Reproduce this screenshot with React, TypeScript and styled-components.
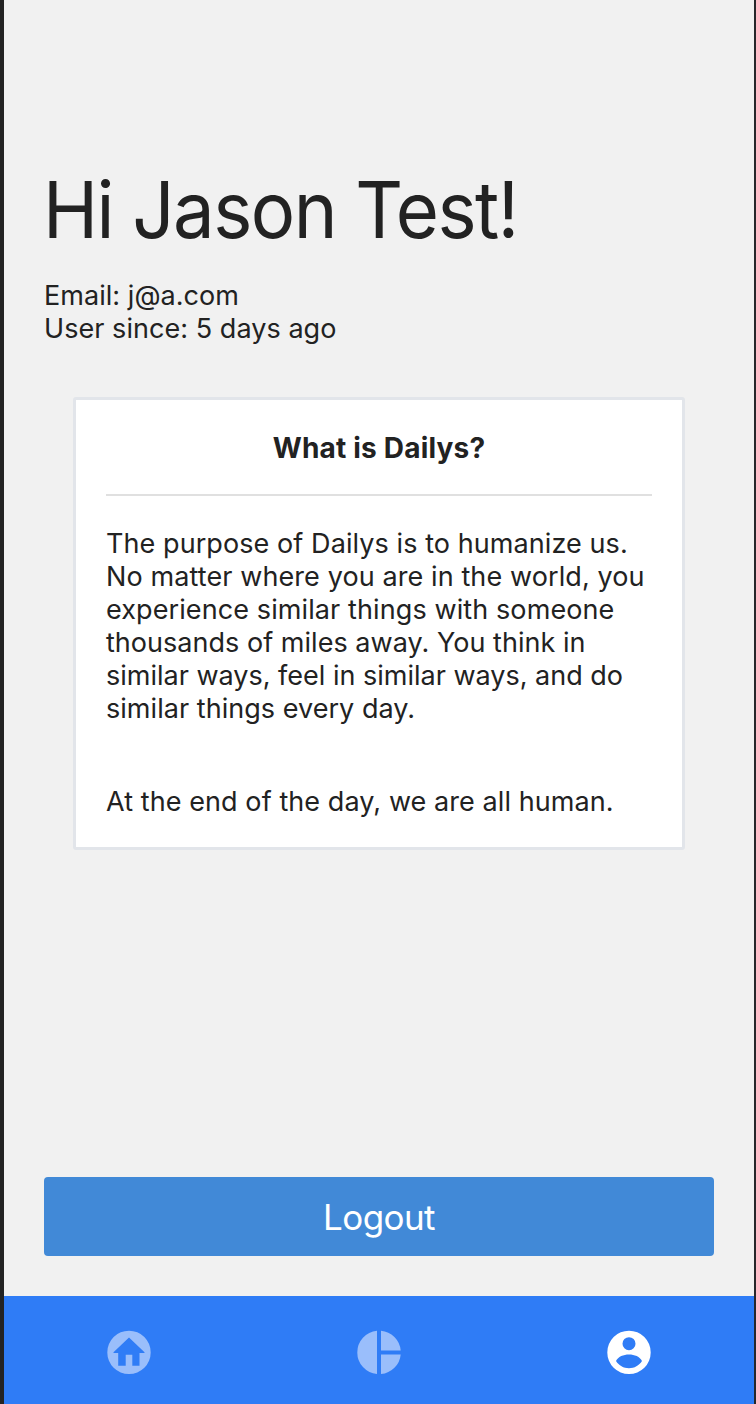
import React from "react";
import styled, { createGlobalStyle } from "styled-components";

const GlobalStyle = createGlobalStyle`
  * { box-sizing: border-box; }
  body { margin: 0; background: #f1f1f1; }
`;

const Screen = styled.div`
  display: flex;
  flex-direction: column;
  height: 1404px;
  border-left: 4px solid #232323;
  border-right: 2px solid #27272b;
  background: #f1f1f1;
  color: #222222;
  font-family: Inter, "Liberation Sans", sans-serif;
  font-size: 27px;
  line-height: 33px;
`;

const Content = styled.main`
  flex: 1;
  display: flex;
  flex-direction: column;
  padding: 160px 40px 40px;
`;

const Line = styled.div<{ $tracking?: number }>`
  white-space: nowrap;
  font-variant-ligatures: none;
  letter-spacing: ${(p) => p.$tracking ?? 0.05}px;
`;

const Greeting = styled.h1`
  margin: 0 0 19px -1px;
  font-size: 78px;
  line-height: 100px;
  font-weight: 400;
  letter-spacing: -1.6px;
  white-space: nowrap;
  transform: scaleX(0.95);
  transform-origin: left center;
`;

const Card = styled.section`
  margin: 52px 29px 0;
  height: 453px;
  border: 3px solid #e2e5ea;
  border-radius: 3px;
  background: #fff;
  padding: 30px;
`;

const CardTitle = styled.h2`
  margin: 0;
  height: 66px;
  border-bottom: 2px solid #e0e0e0;
  text-align: center;
  font-size: 28px;
  line-height: 36px;
  font-weight: 700;
  letter-spacing: 0.2px;
`;

const Paragraph = styled.div`
  margin-top: 31px;
  & + & { margin-top: 60px; }
`;

const LogoutButton = styled.button`
  margin-top: auto;
  height: 79px;
  padding: 2px 0 0;
  border: 0;
  border-radius: 4px;
  background: #4189d7;
  color: #fff;
  font: 400 35px/1 Inter, "Liberation Sans", sans-serif;
  letter-spacing: -0.6px;
`;

const TabBar = styled.nav`
  display: grid;
  grid-template-columns: repeat(3, 1fr);
  justify-items: center;
  height: 108px;
  padding-top: 30px;
  background: #2f7cf6;
`;

const TabIcon = styled.svg<{ $active?: boolean }>`
  width: 52px;
  height: 52px;
  fill: ${(p) => (p.$active ? "#ffffff" : "#9abefb")};
  fill-rule: evenodd;
`;

export default function App() {
  return (
    <Screen>
      <GlobalStyle />
      <Content>
        <Greeting>Hi Jason Test!</Greeting>
        <Line>Email: j@a.com</Line>
        <Line>User since: 5 days ago</Line>
        <Card>
          <CardTitle>What is Dailys?</CardTitle>
          <Paragraph>
            <Line $tracking={0.08}>The purpose of Dailys is to humanize us.</Line>
            <Line $tracking={0.1}>No matter where you are in the world, you</Line>
            <Line $tracking={0.1}>experience similar things with someone</Line>
            <Line $tracking={0.03}>thousands of miles away. You think in</Line>
            <Line $tracking={0}>similar ways, feel in similar ways, and do</Line>
            <Line $tracking={0.04}>similar things every day.</Line>
          </Paragraph>
          <Paragraph>
            <Line $tracking={0.08}>At the end of the day, we are all human.</Line>
          </Paragraph>
        </Card>
        <LogoutButton>Logout</LogoutButton>
      </Content>
      <TabBar>
        <TabIcon viewBox="0 0 52 52">
          <path d="M26 4.700a21.700 21.700 0 1 0 0 43.400 21.700 21.700 0 0 0 0-43.400ZM26 11.400 41.500 26.200V27H36.500V39.700H29.300V28.700H22.700V39.700H15.200V27H10.500V26.200Z" />
        </TabIcon>
        <TabIcon viewBox="0 0 52 52">
          <path d="M24 4.700V48.100A21.800 21.800 0 0 1 24 4.700ZM28 4.700A21.800 21.800 0 0 1 47.700 24.400H28ZM28 28.400H47.700A21.800 21.800 0 0 1 28 48.100Z" />
        </TabIcon>
        <TabIcon $active viewBox="0 0 52 52">
          <path d="M26 4.700a21.700 21.700 0 1 0 0 43.400 21.700 21.700 0 0 0 0-43.400ZM26 11.200a6.500 6.500 0 1 1 0 13 6.500 6.500 0 0 1 0-13ZM13 35C15 30.500 20.500 28.400 26 28.400S37 30.500 39 35C36 39.700 31.500 42.200 26 42.200S16 39.700 13 35Z" />
        </TabIcon>
      </TabBar>
    </Screen>
  );
}
